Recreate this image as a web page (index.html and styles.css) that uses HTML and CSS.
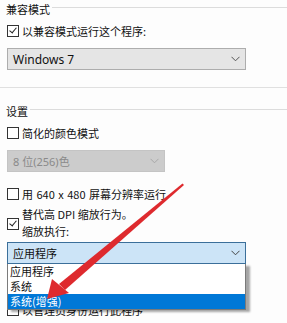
FILE: index.html
```html
<!DOCTYPE html>
<html lang="zh-CN">
<head>
  <meta charset="UTF-8" />
  <meta name="viewport" content="width=device-width, initial-scale=1.0" />
  <title>兼容性</title>
  <link rel="stylesheet" href="styles.css">
</head>
<body>
  <div class="dialog">
    <div class="group-title"><span>兼容模式</span></div>
    <div class="check first"><span class="box checked"></span>以兼容模式运行这个程序:</div>
    <div class="select">
      <span>Windows 7</span>
      <svg class="chev" width="9" height="6" viewBox="0 0 9 6"><path d="M0.5 0.8 L4.5 4.8 L8.5 0.8" fill="none" stroke="#555" stroke-width="1"/></svg>
    </div>

    <div class="sep"></div>

    <div class="group-title second"><span>设置</span></div>
    <div class="check first"><span class="box"></span>简化的颜色模式</div>
    <div class="select disabled">
      <span>8 位(256)色</span>
      <svg class="chev" width="9" height="6" viewBox="0 0 9 6"><path d="M0.5 0.8 L4.5 4.8 L8.5 0.8" fill="none" stroke="#a8a8a8" stroke-width="1"/></svg>
    </div>
    <div class="check res"><span class="box"></span>用 640 x 480 屏幕分辨率运行</div>
    <div class="check multi">
      <span class="box checked"></span>
      <div class="lines">替代高 DPI 缩放行为。<br>缩放执行:</div>
    </div>
    <div class="dropdown">
      <div class="select open">
        <span>应用程序</span>
        <svg class="chev" width="9" height="6" viewBox="0 0 9 6"><path d="M0.5 0.8 L4.5 4.8 L8.5 0.8" fill="none" stroke="#444" stroke-width="1"/></svg>
      </div>
      <ul class="options">
        <li>应用程序</li>
        <li>系统</li>
        <li class="active">系统(增强)</li>
      </ul>
    </div>
    <div class="check admin"><span class="box"></span>以管理员身份运行此程序</div>

    <svg class="arrow" width="287" height="323" viewBox="0 0 287 323">
      <polygon points="182.5,183.5 184,185 65,290 59,284" fill="#de2a2e"/>
      <polygon points="47,299 52,279 69,293" fill="#de2a2e"/>
    </svg>
  </div>
</body>
</html>
```

FILE: styles.css
```css
html, body {
  margin: 0;
  background: #fdfdfd;
}

.dialog {
  position: relative;
  width: 287px;
  height: 323px;
  overflow: hidden;
  font-family: "Noto Sans CJK SC", "Noto Sans", sans-serif;
  font-size: 11px;
  color: #111;
}

.group-title {
  display: flex;
  align-items: center;
  padding: 3px 0 0 6px;
  height: 12px;
  line-height: 12px;
}

.group-title::after {
  content: "";
  flex: 1;
  border-top: 1px solid #dcdcdc;
  margin: -3px 0 0 2px;
}

.group-title.second {
  margin-top: 14px;
}

.check {
  display: flex;
  align-items: center;
  height: 14px;
  padding-left: 7px;
  line-height: 14px;
}

.check.first {
  margin-top: 9px;
}

.check.res {
  margin-top: 15px;
  word-spacing: 1px;
}

.box {
  position: relative;
  box-sizing: border-box;
  width: 12px;
  height: 12px;
  border: 1px solid #333;
  background: #fff;
  margin-right: 3px;
  flex: none;
}

.box.checked::after {
  content: "";
  position: absolute;
  left: 3px;
  top: 0;
  width: 3px;
  height: 6px;
  border: solid #222;
  border-width: 0 1px 1px 0;
  transform: rotate(40deg);
}

.check.multi {
  height: 34px;
  margin-top: 5px;
  align-items: flex-start;
}

.check.multi .box {
  margin-top: 12px;
}

.check.multi .lines {
  line-height: 17px;
}

.select {
  box-sizing: border-box;
  display: flex;
  align-items: center;
  justify-content: space-between;
  width: 239px;
  height: 22px;
  margin: 10px 0 0 7px;
  padding: 0 5px 0 5px;
  background: #e5e5e5;
  border: 1px solid #adadad;
  font-family: "Noto Sans", "Noto Sans CJK SC", sans-serif;
  font-size: 12px;
}

.select.disabled {
  width: 158px;
  background: #cccccc;
  border-color: #c4c4c4;
  color: #8a8a8a;
  font-size: 11px;
}

.dropdown {
  position: relative;
  margin-top: 2px;
}

.select.open {
  margin-top: 0;
  background: #cce4f7;
  border-color: #3b6f9a;
  font-family: "Noto Sans CJK SC", sans-serif;
  font-size: 11px;
}

.options {
  position: absolute;
  top: 22px;
  left: 7px;
  z-index: 2;
  box-sizing: border-box;
  width: 239px;
  margin: 0;
  padding: 0;
  list-style: none;
  background: #fff;
  border: 1px solid #7a7a7a;
  border-top: none;
  box-shadow: 4px 2px 2px rgba(0, 0, 0, 0.35);
}

.options li {
  height: 15px;
  line-height: 15px;
  padding-left: 2px;
}

.options li.active {
  background: #0078d7;
  color: #fff;
}

.check.admin {
  margin-top: 39px;
}

.sep {
  margin-top: 17px;
  height: 1px;
  background: #e0e0e0;
}

.arrow {
  position: absolute;
  left: 0;
  top: 0;
  z-index: 3;
}
```
